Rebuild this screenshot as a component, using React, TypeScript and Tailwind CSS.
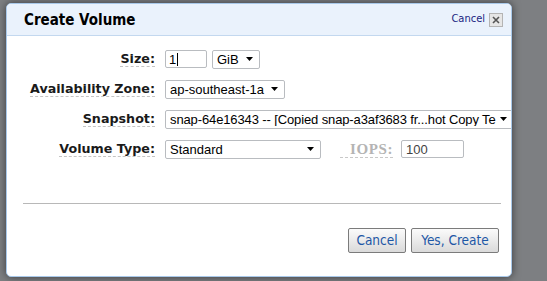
import React from "react";

const tah = { fontFamily: '"DejaVu Sans Condensed", "DejaVu Sans", sans-serif' } as React.CSSProperties;
const ver = { fontFamily: '"DejaVu Sans", Verdana, sans-serif' } as React.CSSProperties;
const ari = { fontFamily: '"Liberation Sans", Arial, sans-serif' } as React.CSSProperties;

function Caret() {
  return (
    <svg width="7" height="4" viewBox="0 0 7 4" className="shrink-0">
      <path d="M0 0 H7 L3.5 4 Z" fill="#000" />
    </svg>
  );
}

function Select({ text, w, tight }: { text: string; w: string; tight?: boolean }) {
  return (
    <div
      className={`${w} h-[19px] flex items-center gap-[3px] pl-[4px] pr-[6px] bg-white border border-[#b9bcc0] rounded-[2px] text-[13px] text-black whitespace-nowrap overflow-hidden`}
      style={ari}
    >
      <span className={`leading-none flex-1 min-w-0 overflow-hidden ${tight ? "tracking-[-0.12px]" : ""}`}>{text}</span>
      <Caret />
    </div>
  );
}

function Label({ children }: { children: React.ReactNode }) {
  return (
    <div className="flex justify-end items-center h-[20px]">
      <span
        className="text-[12.7px] font-bold text-[#1a1a1a] leading-[15px] border-b border-dashed border-[#c4c4c4]"
        style={ver}
      >
        {children}
      </span>
    </div>
  );
}

export default function App() {
  return (
    <div className="w-[547px] h-[281px] bg-[#7d7f82] pt-[3px] pl-[6px] overflow-hidden">
      <div className="w-[506px] h-[274px] bg-white border border-[#a9c9ea] rounded-[5px] shadow-[0_0_8px_rgba(0,0,0,0.55)] flex flex-col overflow-hidden">
        {/* Header */}
        <div className="h-[32px] shrink-0 bg-[#eaf2fc] border-b border-[#c3d8ef] flex items-center justify-between pl-[17px] pr-[8px]">
          <span className="text-[15px] font-bold text-black pt-[1px]" style={tah}>
            Create Volume
          </span>
          <div className="flex items-center gap-[4px]">
            <span className="text-[11px] text-[#1b1f82]" style={tah}>
              Cancel
            </span>
            <div className="w-[14px] h-[14px] bg-[#e6e6e6] border border-[#b4b4b4] flex items-center justify-center">
              <svg width="8" height="8" viewBox="0 0 8 8">
                <path d="M1 1 L7 7 M7 1 L1 7" stroke="#555" strokeWidth="1.6" />
              </svg>
            </div>
          </div>
        </div>

        {/* Body */}
        <div className="pt-[13px] grid grid-cols-[148px_1fr] gap-x-[10px] gap-y-[10px]">
          <Label>Size:</Label>
          <div className="flex items-center gap-[5px] h-[20px]">
            <div className="w-[42px] h-[18px] border border-[#b9bcc0] rounded-[2px] flex items-center pl-[3px] text-[13px] text-black" style={ari}>
              <span className="leading-none">1</span>
              <span className="w-[1px] h-[13px] bg-black ml-[1px]" />
            </div>
            <Select text="GiB" w="w-[48px]" />
          </div>

          <Label>Availability Zone:</Label>
          <div className="flex items-center h-[20px]">
            <Select text="ap-southeast-1a" w="w-[120px]" />
          </div>

          <Label>Snapshot:</Label>
          <div className="flex items-center h-[20px]">
            <Select text="snap-64e16343 -- [Copied snap-a3af3683 fr...hot Copy Te" w="w-[349px]" tight />
          </div>

          <Label>Volume Type:</Label>
          <div className="flex items-center h-[20px]">
            <Select text="Standard" w="w-[156px]" />
            <div className="ml-[16px] w-[56px] flex justify-end">
              <span
                className="text-[15px] font-bold tracking-[0.6px] text-[#b4b4b4] leading-[16px] border-b border-dashed border-[#c8c8c8] pl-[10px]"
                style={{ fontFamily: '"Liberation Serif", "Times New Roman", serif' }}
              >
                IOPS:
              </span>
            </div>
            <div className="ml-[8px] w-[63px] h-[18px] border border-[#b9bcc0] rounded-[2px] flex items-center pl-[4px] text-[13px] text-[#444]" style={ari}>
              <span className="leading-none">100</span>
            </div>
          </div>
        </div>

        {/* Divider */}
        <div className="mt-[44px] ml-[16px] mr-[10px] h-[1px] bg-[#b8b8b8]" />

        {/* Buttons */}
        <div className="mt-[24px] flex justify-end gap-[5px] pr-[12px]">
          <button
            className="w-[58px] h-[25px] border border-[#7b7b7b] rounded-[2px] bg-gradient-to-b from-[#fbfbfb] to-[#dadada] text-[13.5px] text-[#1d57a5]"
            style={tah}
          >
            Cancel
          </button>
          <button
            className="w-[88px] h-[25px] border border-[#7b7b7b] rounded-[2px] bg-gradient-to-b from-[#fbfbfb] to-[#dadada] text-[13.5px] text-[#1d57a5]"
            style={tah}
          >
            Yes, Create
          </button>
        </div>
      </div>
    </div>
  );
}
